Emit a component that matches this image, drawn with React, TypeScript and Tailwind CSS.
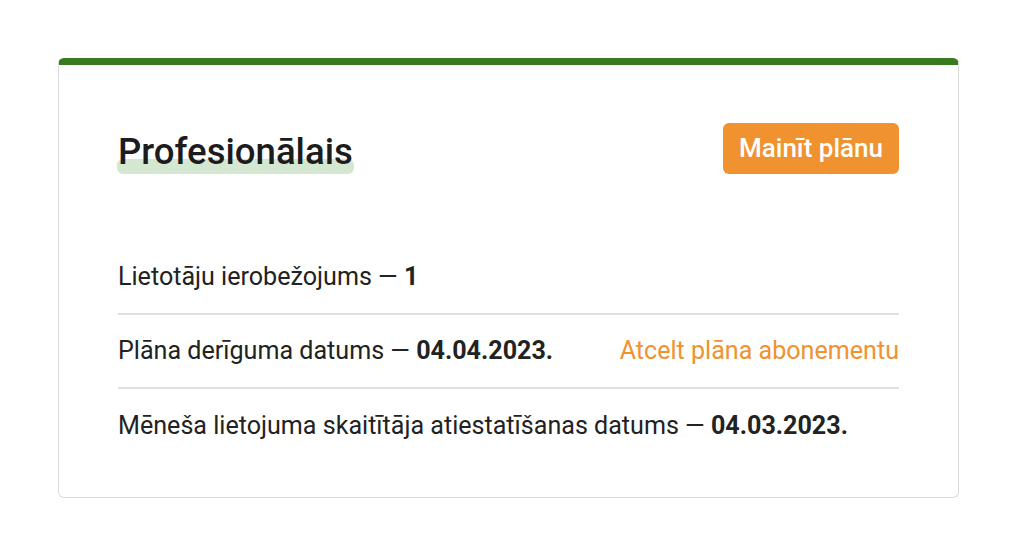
import React from 'react'

export default function App() {
  return (
    <div className="min-h-[554px] bg-white pt-[58px] font-['Roboto',sans-serif] text-[#222]">
      <div className="ml-[58px] w-[901px] rounded-md border border-[#dcdcdc] border-t-[7px] border-t-[#367c1f] px-[59px] pt-[58px] pb-[34px]">
        <div className="flex items-center justify-between">
          <h2 className="relative mt-[6px] text-[36.6px] font-medium leading-[44px] text-[#1c1c1c]">
            <span className="absolute -left-px -right-px bottom-0 h-[15px] rounded-md bg-[#d4e7d0]" />
            <span className="relative">Profesionālais</span>
          </h2>
          <button className="h-[51px] w-[176px] rounded-md bg-[#f0922f] text-[26px] font-medium text-white">
            Mainīt plānu
          </button>
        </div>
        <div className="mt-[67px] text-[25.1px]">
          <div className="flex h-[74px] items-center border-b-2 border-[#e0e0e0]">
            <span>Lietotāju ierobežojums — <b className="font-bold">1</b></span>
          </div>
          <div className="flex h-[74px] items-center justify-between border-b-2 border-[#e0e0e0]">
            <span>Plāna derīguma datums — <b className="font-bold">04.04.2023.</b></span>
            <a href="#" className="text-[#f0922f]">Atcelt plāna abonementu</a>
          </div>
          <div className="flex h-[74px] items-center">
            <span>Mēneša lietojuma skaitītāja atiestatīšanas datums — <b className="font-bold">04.03.2023.</b></span>
          </div>
        </div>
      </div>
    </div>
  )
}
